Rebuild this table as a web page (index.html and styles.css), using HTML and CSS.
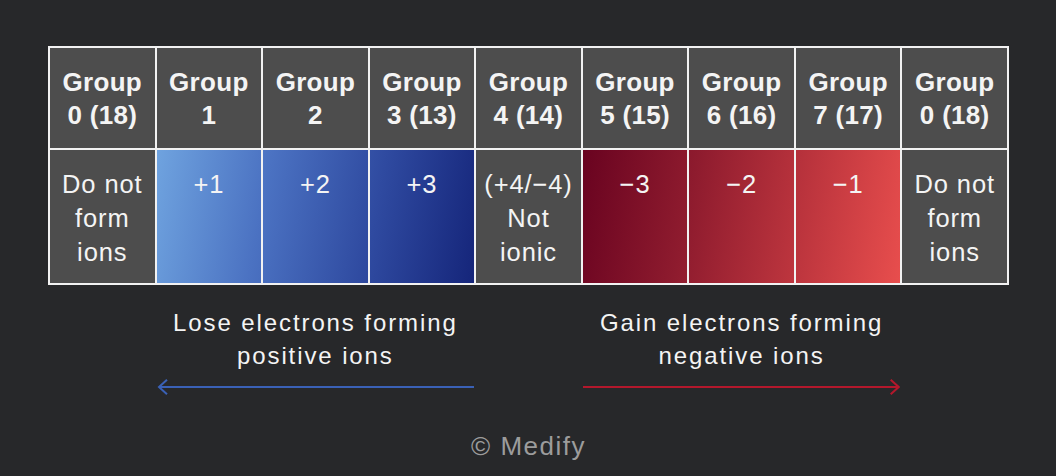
FILE: index.html
```html
<!DOCTYPE html>
<html lang="en">
<head>
<meta charset="utf-8">
<title>Ions formed by periodic groups</title>
<link rel="stylesheet" href="styles.css">
</head>
<body>
<main class="page">
  <div class="table">
    <div class="cell head">Group<br>0 (18)</div>
    <div class="cell head">Group<br>1</div>
    <div class="cell head">Group<br>2</div>
    <div class="cell head">Group<br>3 (13)</div>
    <div class="cell head">Group<br>4 (14)</div>
    <div class="cell head">Group<br>5 (15)</div>
    <div class="cell head">Group<br>6 (16)</div>
    <div class="cell head">Group<br>7 (17)</div>
    <div class="cell head">Group<br>0 (18)</div>

    <div class="cell body plain">Do not<br>form<br>ions</div>
    <div class="cell body pos pos-1">+1</div>
    <div class="cell body pos pos-2">+2</div>
    <div class="cell body pos pos-3">+3</div>
    <div class="cell body plain">(+4/−4)<br>Not<br>ionic</div>
    <div class="cell body neg neg-3">−3</div>
    <div class="cell body neg neg-2">−2</div>
    <div class="cell body neg neg-1">−1</div>
    <div class="cell body plain">Do not<br>form<br>ions</div>
  </div>

  <div class="legend">
    <div class="caption caption-lose">
      <p class="caption-text">Lose electrons forming<br>positive ions</p>
      <svg class="arrow" viewBox="0 0 318 16" width="318" height="16" aria-hidden="true">
        <line x1="2" y1="8" x2="318" y2="8" stroke="#3a61b6" stroke-width="2"/>
        <polyline points="10,0.8 2,8 10,15.2" fill="none" stroke="#3a61b6" stroke-width="2"/>
      </svg>
    </div>
    <div class="caption caption-gain">
      <p class="caption-text">Gain electrons forming<br>negative ions</p>
      <svg class="arrow" viewBox="0 0 318 16" width="318" height="16" aria-hidden="true">
        <line x1="0" y1="8" x2="316" y2="8" stroke="#b3182c" stroke-width="2"/>
        <polyline points="308,0.8 316,8 308,15.2" fill="none" stroke="#b3182c" stroke-width="2"/>
      </svg>
    </div>
  </div>

  <footer class="credit">© Medify</footer>
</main>
</body>
</html>
```

FILE: styles.css
```css
* {
  box-sizing: border-box;
}

html, body {
  margin: 0;
  padding: 0;
}

body {
  width: 1056px;
  height: 476px;
  overflow: hidden;
  background: #27282a;
  color: #f4f4f4;
  font-family: "Liberation Sans", Arial, sans-serif;
}

.page {
  padding: 46px 47px 0 48px;
}

.table {
  display: grid;
  grid-template-columns: repeat(9, 1fr);
  grid-template-rows: 100px 133px;
  gap: 2px;
  padding: 2px;
  background: #f2f2f2;
}

.cell {
  text-align: center;
  white-space: nowrap;
}

.head {
  background: #4d4d4d;
  font-weight: 700;
  font-size: 26px;
  line-height: 33px;
  letter-spacing: 0.3px;
  display: flex;
  align-items: center;
  justify-content: center;
  padding-top: 2px;
}

.body {
  font-size: 25.5px;
  line-height: 34px;
  letter-spacing: 0.9px;
  padding-top: 17px;
}

.plain {
  background: #4d4d4d;
}

.pos {
  background-image: linear-gradient(100deg, #6fa3df 0%, #4b72c2 34%, #2f4aa0 67%, #15257a 100%);
  background-size: 300% 100%;
}

.pos-1 { background-position: 0% 0; }
.pos-2 { background-position: 50% 0; }
.pos-3 { background-position: 100% 0; }

.neg {
  background-image: linear-gradient(100deg, #690320 0%, #8e1b2e 34%, #bb343d 67%, #e84e4d 100%);
  background-size: 300% 100%;
}

.neg-3 { background-position: 0% 0; }
.neg-2 { background-position: 50% 0; }
.neg-1 { background-position: 100% 0; }

.legend {
  display: grid;
  grid-template-columns: repeat(9, 1fr);
  gap: 2px;
  padding: 0 2px;
  margin-top: 21px;
}

.caption {
  display: flex;
  flex-direction: column;
  align-items: center;
}

.caption-lose {
  grid-column: 2 / 5;
}

.caption-gain {
  grid-column: 6 / 9;
}

.caption-text {
  margin: 0;
  font-size: 24px;
  line-height: 33px;
  letter-spacing: 1.9px;
  text-align: center;
  white-space: nowrap;
}

.arrow {
  display: block;
  width: 100%;
  height: 16px;
  margin-top: 7px;
}

.credit {
  margin-top: 36px;
  text-align: center;
  color: #9c9c9c;
  font-size: 26px;
  line-height: 30px;
  letter-spacing: 1.5px;
}
```
